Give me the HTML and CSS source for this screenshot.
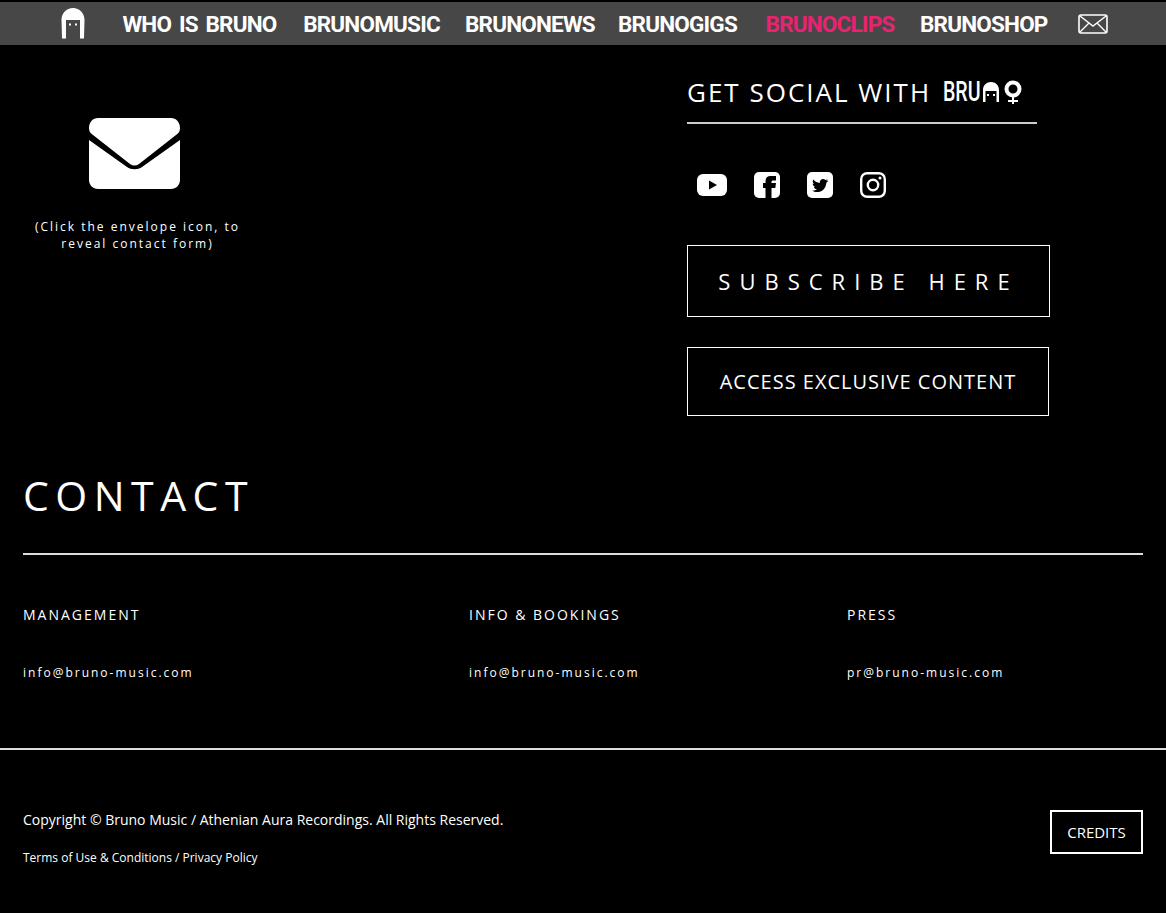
FILE: index.html
```html
<!DOCTYPE html>
<html lang="en">
<head>
    <meta charset="UTF-8">
    <title>Bruno Music - Contact</title>
    <link rel="stylesheet" href="styles.css">
</head>
<body>
    <nav class="topnav">
        <svg class="nav-logo" viewBox="0 0 24 31"><path d="M1 30.500L.5 12C.5 5 5.500 0 12 0s11.500 5 11.500 12L23 30.500h-4L19 12H5l0 18.500z" fill="#fff"/><path d="M8 15.500h2v2H8zM14 15.500h2v2h-2z" fill="#fff"/></svg>
        <a class="nav-link" href="#">WHO IS BRUNO</a>
        <a class="nav-link" href="#">BRUNOMUSIC</a>
        <a class="nav-link" href="#">BRUNONEWS</a>
        <a class="nav-link" href="#">BRUNOGIGS</a>
        <a class="nav-link active" href="#">BRUNOCLIPS</a>
        <a class="nav-link" href="#">BRUNOSHOP</a>
        <svg class="nav-mail" viewBox="0 0 30 20"><rect x="1" y="1" width="28" height="18" rx="2" fill="none" stroke="#fff" stroke-width="1.6"/><path d="M2 2l13 10L28 2M2 18l9-9M28 18l-9-9" fill="none" stroke="#fff" stroke-width="1.4"/></svg>
    </nav>

    <section class="top-section">
        <div class="envelope-col">
            <svg class="envelope" viewBox="0 0 91 71"><path d="M0 10C0 4 4 0 9 0h73c5 0 9 4 9 10 0 3-1 5-4 7L50 46c-3 2-6 2-9 0L4 17c-3-2-4-4-4-7z" fill="#fff"/><path d="M0 22l38 27c4 3 11 3 15 0l38-27v40c0 5-4 9-9 9H9c-5 0-9-4-9-9z" fill="#fff"/></svg>
            <p class="envelope-note">(Click the envelope icon, to reveal contact form)</p>
        </div>
        <div class="social-col">
            <h3 class="social-title">
                GET SOCIAL WITH
                <span class="mini-logo">
                    <span class="mini-logo-text">BRU</span>
                    <svg class="mini-logo-end" viewBox="39 0 39 24">
                        <path d="M39 22V10c0-5 3.500-8 8-8s8 3 8 8v12h-2.500V11h-11v11z" fill="#fff"/>
                        <path d="M43 14h2v2h-2zM49 14h2v2h-2z" fill="#fff"/>
                        <circle cx="69" cy="9" r="6.500" fill="none" stroke="#fff" stroke-width="4"/>
                        <path d="M69 16v8M64 21h10" stroke="#fff" stroke-width="2"/>
                    </svg>
                </span>
            </h3>
            <div class="social-icons">
                <svg class="ico-yt" viewBox="0 0 30 22"><rect width="30" height="22" rx="6" fill="#fff"/><path d="M12 6.500l8 4.500-8 4.500z" fill="#000"/></svg>
                <svg class="ico" viewBox="0 0 26 26"><rect width="26" height="26" rx="5" fill="#fff"/><path d="M11.500 26V16H9v-5h2.500V9c0-3.200 2-5 5-5H22v4.500h-3c-1 0-1.500.5-1.500 1.500v1H22l-.7 5h-3.800v10z" fill="#000"/></svg>
                <svg class="ico" viewBox="0 0 26 26"><rect width="26" height="26" rx="5" fill="#fff"/><path d="M21 8.500c-.6.300-1.200.4-1.900.5.700-.4 1.200-1 1.400-1.800-.6.400-1.300.6-2.100.8-1.300-1.400-3.500-1.300-4.700 0-.8.900-1 1.900-.8 3-2.700-.1-5.100-1.400-6.700-3.400-.9 1.500-.4 3.400 1 4.400-.5 0-1-.2-1.500-.4 0 1.600 1.100 3 2.700 3.300-.5.100-1 .2-1.500.1.400 1.300 1.700 2.300 3.100 2.300-1.400 1.100-3.200 1.600-4.900 1.400 4.500 2.900 11.900 1.500 13.900-5.700.2-.8.300-1.600.300-2.300.7-.5 1.300-1.100 1.700-1.700z" fill="#000"/></svg>
                <svg class="ico" viewBox="0 0 26 26"><rect x="1.200" y="1.200" width="23.600" height="23.600" rx="6" fill="none" stroke="#fff" stroke-width="2.400"/><circle cx="13" cy="13" r="5.200" fill="none" stroke="#fff" stroke-width="2.400"/><circle cx="20" cy="6" r="1.500" fill="#fff"/></svg>
            </div>
            <a class="box-btn subscribe" href="#">SUBSCRIBE HERE</a>
            <a class="box-btn exclusive" href="#">ACCESS EXCLUSIVE CONTENT</a>
        </div>
    </section>

    <section class="contact">
        <h1 class="contact-title">CONTACT</h1>
        <div class="contact-grid">
            <div class="contact-item">
                <h4>MANAGEMENT</h4>
                <a href="#">info@bruno-music.com</a>
            </div>
            <div class="contact-item">
                <h4>INFO &amp; BOOKINGS</h4>
                <a href="#">info@bruno-music.com</a>
            </div>
            <div class="contact-item">
                <h4>PRESS</h4>
                <a href="#">pr@bruno-music.com</a>
            </div>
        </div>
    </section>

    <footer class="footer">
        <div>
            <p class="copyright">Copyright © Bruno Music / Athenian Aura Recordings. All Rights Reserved.</p>
            <p class="terms">Terms of Use &amp; Conditions / Privacy Policy</p>
        </div>
        <a class="credits" href="#">CREDITS</a>
    </footer>
</body>
</html>
```
FILE: styles.css
```css
body {
    margin: 0;
    background-color: #000;
    color: #fff;
    font-family: "Open Sans", Arial, sans-serif;
}
a {
    color: #fff;
    text-decoration: none;
}
p, h1, h3, h4 {
    margin: 0;
    font-weight: 400;
}
.topnav {
    display: grid;
    grid-template-columns: 35px 157px 137px 125px 125px 130px 125px 38px;
    column-gap: 25px;
    align-items: center;
    height: 43px;
    margin-top: 2px;
    padding-left: 61px;
    background-color: #474747;
}
.nav-logo {
    width: 24px;
    height: 31px;
}
.nav-link {
    font-family: Roboto, Arial, sans-serif;
    font-size: 22.5px;
    font-weight: 700;
    letter-spacing: -0.8px;
    word-spacing: 3px;
    text-align: center;
    white-space: nowrap;
}
.nav-link.active {
    color: #ea2271;
}
.nav-mail {
    width: 30px;
    height: 20px;
    margin-left: 8px;
}
.top-section {
    display: flex;
    height: 371px;
}
.envelope-col {
    width: 687px;
    padding: 73px 0 0 23px;
    box-sizing: border-box;
}
.envelope {
    display: block;
    width: 91px;
    height: 71px;
    margin-left: 66px;
}
.envelope-note {
    width: 229px;
    margin-top: 29px;
    font-size: 12px;
    line-height: 17px;
    letter-spacing: 2px;
    text-align: center;
}
.social-col {
    padding-top: 32px;
}
.social-title {
    display: flex;
    align-items: center;
    box-sizing: border-box;
    width: 350px;
    height: 47px;
    padding-bottom: 16px;
    border-bottom: 2px solid #ccc;
    font-size: 26px;
    letter-spacing: 2px;
}
.mini-logo {
    display: flex;
    align-items: center;
    margin-left: 12px;
}
.mini-logo-text {
    display: block;
    margin-right: -15px;
    font-family: Roboto, Arial, sans-serif;
    font-size: 28px;
    font-weight: 500;
    line-height: 24px;
    letter-spacing: 0;
    transform: scaleX(0.7);
    transform-origin: left center;
}
.mini-logo-end {
    width: 39px;
    height: 24px;
    margin-left: 1px;
}
.social-icons {
    display: flex;
    align-items: center;
    gap: 27px;
    height: 26px;
    margin: 48px 0 47px 10px;
}
.ico-yt {
    width: 30px;
    height: 22px;
}
.ico {
    width: 26px;
    height: 26px;
}
.box-btn {
    display: block;
    box-sizing: border-box;
    border: 1px solid #fff;
    text-align: center;
}
.subscribe {
    width: 363px;
    height: 72px;
    font-size: 22px;
    line-height: 70px;
    letter-spacing: 9px;
}
.exclusive {
    width: 362px;
    height: 69px;
    margin-top: 30px;
    font-size: 20px;
    line-height: 67px;
    letter-spacing: 1px;
}
.contact {
    padding: 0 23px;
}
.contact-title {
    height: 96px;
    padding-top: 41px;
    border-bottom: 2px solid #ddd;
    font-size: 41px;
    line-height: 77px;
    letter-spacing: 6.5px;
}
.contact-grid {
    display: grid;
    grid-template-columns: 446px 378px 1fr;
    height: 193px;
}
.contact-item h4 {
    margin-top: 50px;
    font-size: 14px;
    line-height: 20px;
    letter-spacing: 2px;
}
.contact-item a {
    display: block;
    margin-top: 38px;
    font-size: 12px;
    line-height: 20px;
    letter-spacing: 2px;
}
.footer {
    display: flex;
    justify-content: space-between;
    align-items: flex-start;
    box-sizing: border-box;
    height: 165px;
    padding: 60px 23px 0;
    border-top: 2px solid #ddd;
}
.copyright {
    font-size: 14px;
    line-height: 20px;
}
.terms {
    margin-top: 18px;
    font-size: 12px;
    line-height: 20px;
}
.credits {
    box-sizing: border-box;
    width: 93px;
    height: 44px;
    border: 2px solid #fff;
    font-size: 15px;
    line-height: 40px;
    text-align: center;
}
```
